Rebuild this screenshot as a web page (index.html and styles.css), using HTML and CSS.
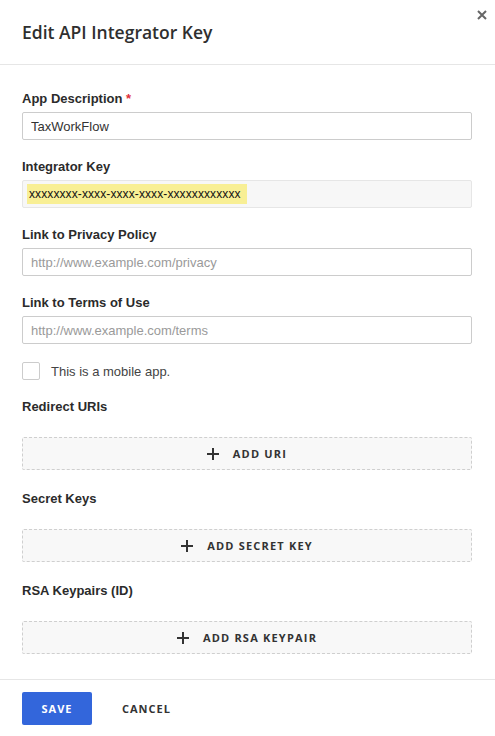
FILE: index.html
```html
<!DOCTYPE html>
<html lang="en">
<head>
<meta charset="utf-8">
<title>Edit API Integrator Key</title>
<link rel="stylesheet" href="styles.css">
</head>
<body>
<div class="dialog">
  <header class="dlg-header">
    <h1 class="dlg-title">Edit API Integrator Key</h1>
    <button class="close" aria-label="Close">
      <svg width="10" height="10" viewBox="0 0 10 10"><path d="M1 1L9 9M9 1L1 9" stroke="#666" stroke-width="2" fill="none"/></svg>
    </button>
  </header>
  <div class="dlg-body">
    <div class="group">
      <label class="label">App Description <span class="req">*</span></label>
      <input class="field" type="text" value="TaxWorkFlow">
    </div>
    <div class="group">
      <label class="label">Integrator Key</label>
      <div class="field readonly"><span class="hl">xxxxxxxx-xxxx-xxxx-xxxx-xxxxxxxxxxxx</span></div>
    </div>
    <div class="group">
      <label class="label">Link to Privacy Policy</label>
      <input class="field" type="text" placeholder="http://www.example.com/privacy">
    </div>
    <div class="group">
      <label class="label">Link to Terms of Use</label>
      <input class="field" type="text" placeholder="http://www.example.com/terms">
    </div>
    <div class="check-row">
      <span class="checkbox"></span>
      <span class="check-text">This is a mobile app.</span>
    </div>
    <div class="section">
      <div class="label">Redirect URIs</div>
      <button class="add-btn"><span class="plus"></span>ADD URI</button>
    </div>
    <div class="section">
      <div class="label">Secret Keys</div>
      <button class="add-btn"><span class="plus"></span>ADD SECRET KEY</button>
    </div>
    <div class="section">
      <div class="label">RSA Keypairs (ID)</div>
      <button class="add-btn"><span class="plus"></span>ADD RSA KEYPAIR</button>
    </div>
  </div>
  <footer class="dlg-footer">
    <button class="btn-primary">SAVE</button>
    <button class="btn-text">CANCEL</button>
  </footer>
</div>
</body>
</html>
```

FILE: styles.css
```css
* { box-sizing: border-box; }
html, body { margin: 0; padding: 0; background: #fff; }
body { font-family: "Liberation Sans", Arial, sans-serif; color: #333; }

.dialog { position: relative; width: 495px; }

.dlg-header {
  height: 65px;
  display: flex;
  align-items: center;
  padding: 0 22px 1px;
  border-bottom: 1px solid #e6e6e6;
}
.dlg-title {
  margin: 0;
  font-family: "Open Sans", sans-serif;
  font-weight: 600;
  font-size: 17.5px;
  color: #2f2f2f;
}
.close {
  position: absolute;
  top: 10px;
  right: 8px;
  width: 10px;
  height: 10px;
  padding: 0;
  border: 0;
  background: none;
  display: flex;
}

.dlg-body { padding: 26px 23px 25px 22px; }

.group { margin-bottom: 19px; }
.label {
  display: block;
  font-size: 13px;
  line-height: 16px;
  font-weight: bold;
  color: #2b2b2b;
  margin-bottom: 5px;
}
.req { color: #e0303a; }

.field {
  display: block;
  width: 100%;
  height: 28px;
  border: 1px solid #cccccc;
  border-radius: 2px;
  padding: 0 8px;
  font-family: "Liberation Sans", Arial, sans-serif;
  font-size: 13px;
  color: #333;
  background: #fff;
  outline: none;
}
.field::placeholder { color: #9a9a9a; }
.readonly {
  background: #f7f7f7;
  border-color: #e6e6e6;
  padding: 3px 4px;
}
.hl {
  display: inline-block;
  background: #f8ef95;
  color: #111;
  font-size: 12px;
  letter-spacing: 0.1px;
  line-height: 20px;
  padding: 0 6px 0 2px;
}

.check-row {
  display: flex;
  align-items: center;
  gap: 11px;
  margin-top: -1px;
  margin-bottom: 19px;
}
.checkbox {
  width: 18px;
  height: 18px;
  border: 1px solid #cccccc;
  border-radius: 2px;
  background: #fff;
}
.check-text { font-size: 13px; color: #444; }

.section { margin-bottom: 21px; }
.section:last-child { margin-bottom: 0; }
.section .label { margin-bottom: 22px; }

.add-btn {
  display: flex;
  align-items: center;
  justify-content: center;
  width: 100%;
  height: 33px;
  border: 1px dashed #cfcfcf;
  border-radius: 2px;
  background: #f8f8f8;
  font-family: "Open Sans", sans-serif;
  font-weight: 700;
  font-size: 11px;
  letter-spacing: 1.2px;
  color: #333;
  padding: 0;
}
.plus {
  position: relative;
  width: 12px;
  height: 12px;
  margin-right: 14px;
}
.plus::before, .plus::after {
  content: "";
  position: absolute;
  background: #333;
}
.plus::before { left: 0; top: 5px; width: 12px; height: 2px; }
.plus::after { left: 5px; top: 0; width: 2px; height: 12px; }

.dlg-footer {
  border-top: 1px solid #e6e6e6;
  padding: 12px 22px;
  display: flex;
  align-items: center;
}
.btn-primary {
  width: 70px;
  height: 33px;
  border: 0;
  border-radius: 2px;
  background: #3366db;
  color: #fff;
  font-family: "Open Sans", sans-serif;
  font-weight: 700;
  font-size: 11px;
  letter-spacing: 1px;
  padding: 0;
}
.btn-text {
  margin-left: 10px;
  padding: 0 20px;
  height: 33px;
  border: 0;
  background: none;
  color: #333;
  font-family: "Open Sans", sans-serif;
  font-weight: 700;
  font-size: 11px;
  letter-spacing: 1px;
}
```
